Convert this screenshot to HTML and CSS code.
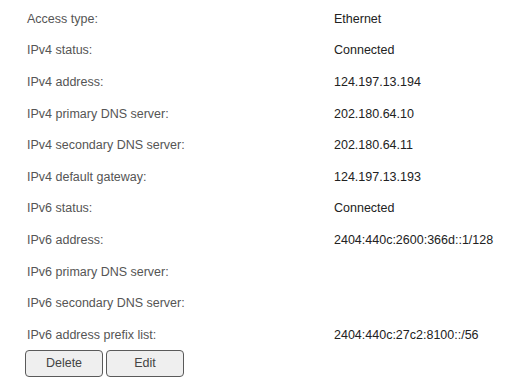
FILE: index.html
```html
<!DOCTYPE html>
<html>
<head>
<meta charset="utf-8">
<link rel="stylesheet" href="styles.css">
</head>
<body>
<div class="panel">
  <div class="info">
    <div class="row"><span class="label">Access type:</span><span class="value">Ethernet</span></div>
    <div class="row"><span class="label">IPv4 status:</span><span class="value">Connected</span></div>
    <div class="row"><span class="label">IPv4 address:</span><span class="value">124.197.13.194</span></div>
    <div class="row"><span class="label">IPv4 primary DNS server:</span><span class="value">202.180.64.10</span></div>
    <div class="row"><span class="label">IPv4 secondary DNS server:</span><span class="value">202.180.64.11</span></div>
    <div class="row"><span class="label">IPv4 default gateway:</span><span class="value">124.197.13.193</span></div>
    <div class="row"><span class="label">IPv6 status:</span><span class="value">Connected</span></div>
    <div class="row"><span class="label">IPv6 address:</span><span class="value">2404:440c:2600:366d::1/128</span></div>
    <div class="row"><span class="label">IPv6 primary DNS server:</span><span class="value"></span></div>
    <div class="row"><span class="label">IPv6 secondary DNS server:</span><span class="value"></span></div>
    <div class="row"><span class="label">IPv6 address prefix list:</span><span class="value">2404:440c:27c2:8100::/56</span></div>
  </div>
  <div class="actions">
    <button class="btn">Delete</button>
    <button class="btn">Edit</button>
  </div>
</div>
</body>
</html>
```
FILE: styles.css
```css
html, body {
  margin: 0;
  padding: 0;
  background: #ffffff;
}
body {
  font-family: "Liberation Sans", Arial, sans-serif;
  font-size: 12.5px;
}
.panel {
  padding: 3px 0 0 27px;
}
.info {
  display: flex;
  flex-direction: column;
}
.row {
  display: grid;
  grid-template-columns: 307px 1fr;
  height: 31.6px;
  align-items: center;
}
.label {
  color: #555555;
}
.value {
  color: #222222;
}
.actions {
  display: flex;
  gap: 3px;
  margin-top: -1px;
  margin-left: -2px;
}
.btn {
  width: 78px;
  height: 27px;
  border: 1px solid #5a5a5a;
  border-radius: 4px;
  background: #efefef;
  color: #444444;
  font-family: "Liberation Sans", Arial, sans-serif;
  font-size: 12.5px;
  padding: 0;
}
```
